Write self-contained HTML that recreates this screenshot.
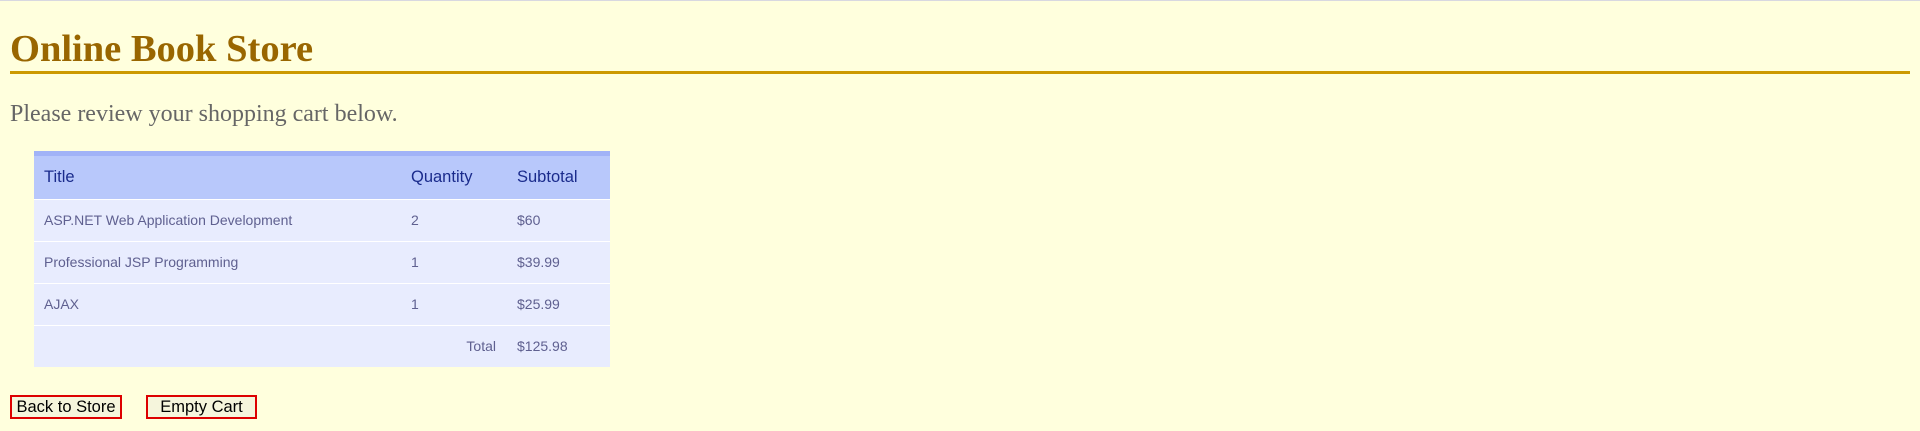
<!DOCTYPE html>
<html><head><meta charset="utf-8"><style>
html,body{margin:0;padding:0;}
body{width:1920px;height:431px;background:#ffffdd;border-top:1px solid #d8d8e0;box-sizing:border-box;position:relative;overflow:hidden;}
h1{position:absolute;left:10px;top:22px;margin:0;font:bold 38.5px "Liberation Serif",serif;color:#996600;line-height:52px;white-space:nowrap;}
.rule{position:absolute;left:10px;top:70px;width:1900px;height:3px;background:#cc9900;}
p{position:absolute;left:10px;top:98px;margin:0;font:24px "Liberation Serif",serif;color:#666;line-height:30px;white-space:nowrap;}
.tbl{position:absolute;left:34px;top:150px;width:576px;}
.strip{height:5px;background:#a1b3f7;}
.row{position:relative;height:41px;background:#e8ecfe;border-top:1px solid #fff;font:14px "Liberation Sans",sans-serif;color:#5f6090;}
.hdr{height:43px;background:#b8c8fb;border-top:0;font-size:16.5px;color:#1a2b8c;}
.row span{position:absolute;top:0;line-height:41px;white-space:nowrap;}
.hdr span{line-height:43px;}
.c1{left:10px}.c2{left:377px}.c3{left:483px}
.tot{right:114px}
.btn{position:absolute;top:394px;height:24px;box-sizing:border-box;border:2px solid #dd0000;background:#f5f5dc;font:16.5px "Liberation Sans",sans-serif;color:#000;line-height:20px;text-align:center;}
</style></head><body>
<h1>Online Book Store</h1>
<div class="rule"></div>
<p>Please review your shopping cart below.</p>
<div class="tbl">
<div class="strip"></div>
<div class="row hdr"><span class="c1">Title</span><span class="c2">Quantity</span><span class="c3">Subtotal</span></div>
<div class="row"><span class="c1">ASP.NET Web Application Development</span><span class="c2">2</span><span class="c3">$60</span></div>
<div class="row"><span class="c1">Professional JSP Programming</span><span class="c2">1</span><span class="c3">$39.99</span></div>
<div class="row"><span class="c1">AJAX</span><span class="c2">1</span><span class="c3">$25.99</span></div>
<div class="row"><span class="tot">Total</span><span class="c3">$125.98</span></div>
</div>
<div class="btn" style="left:10px;width:112px;">Back to Store</div>
<div class="btn" style="left:146px;width:111px;">Empty Cart</div>
</body></html>
